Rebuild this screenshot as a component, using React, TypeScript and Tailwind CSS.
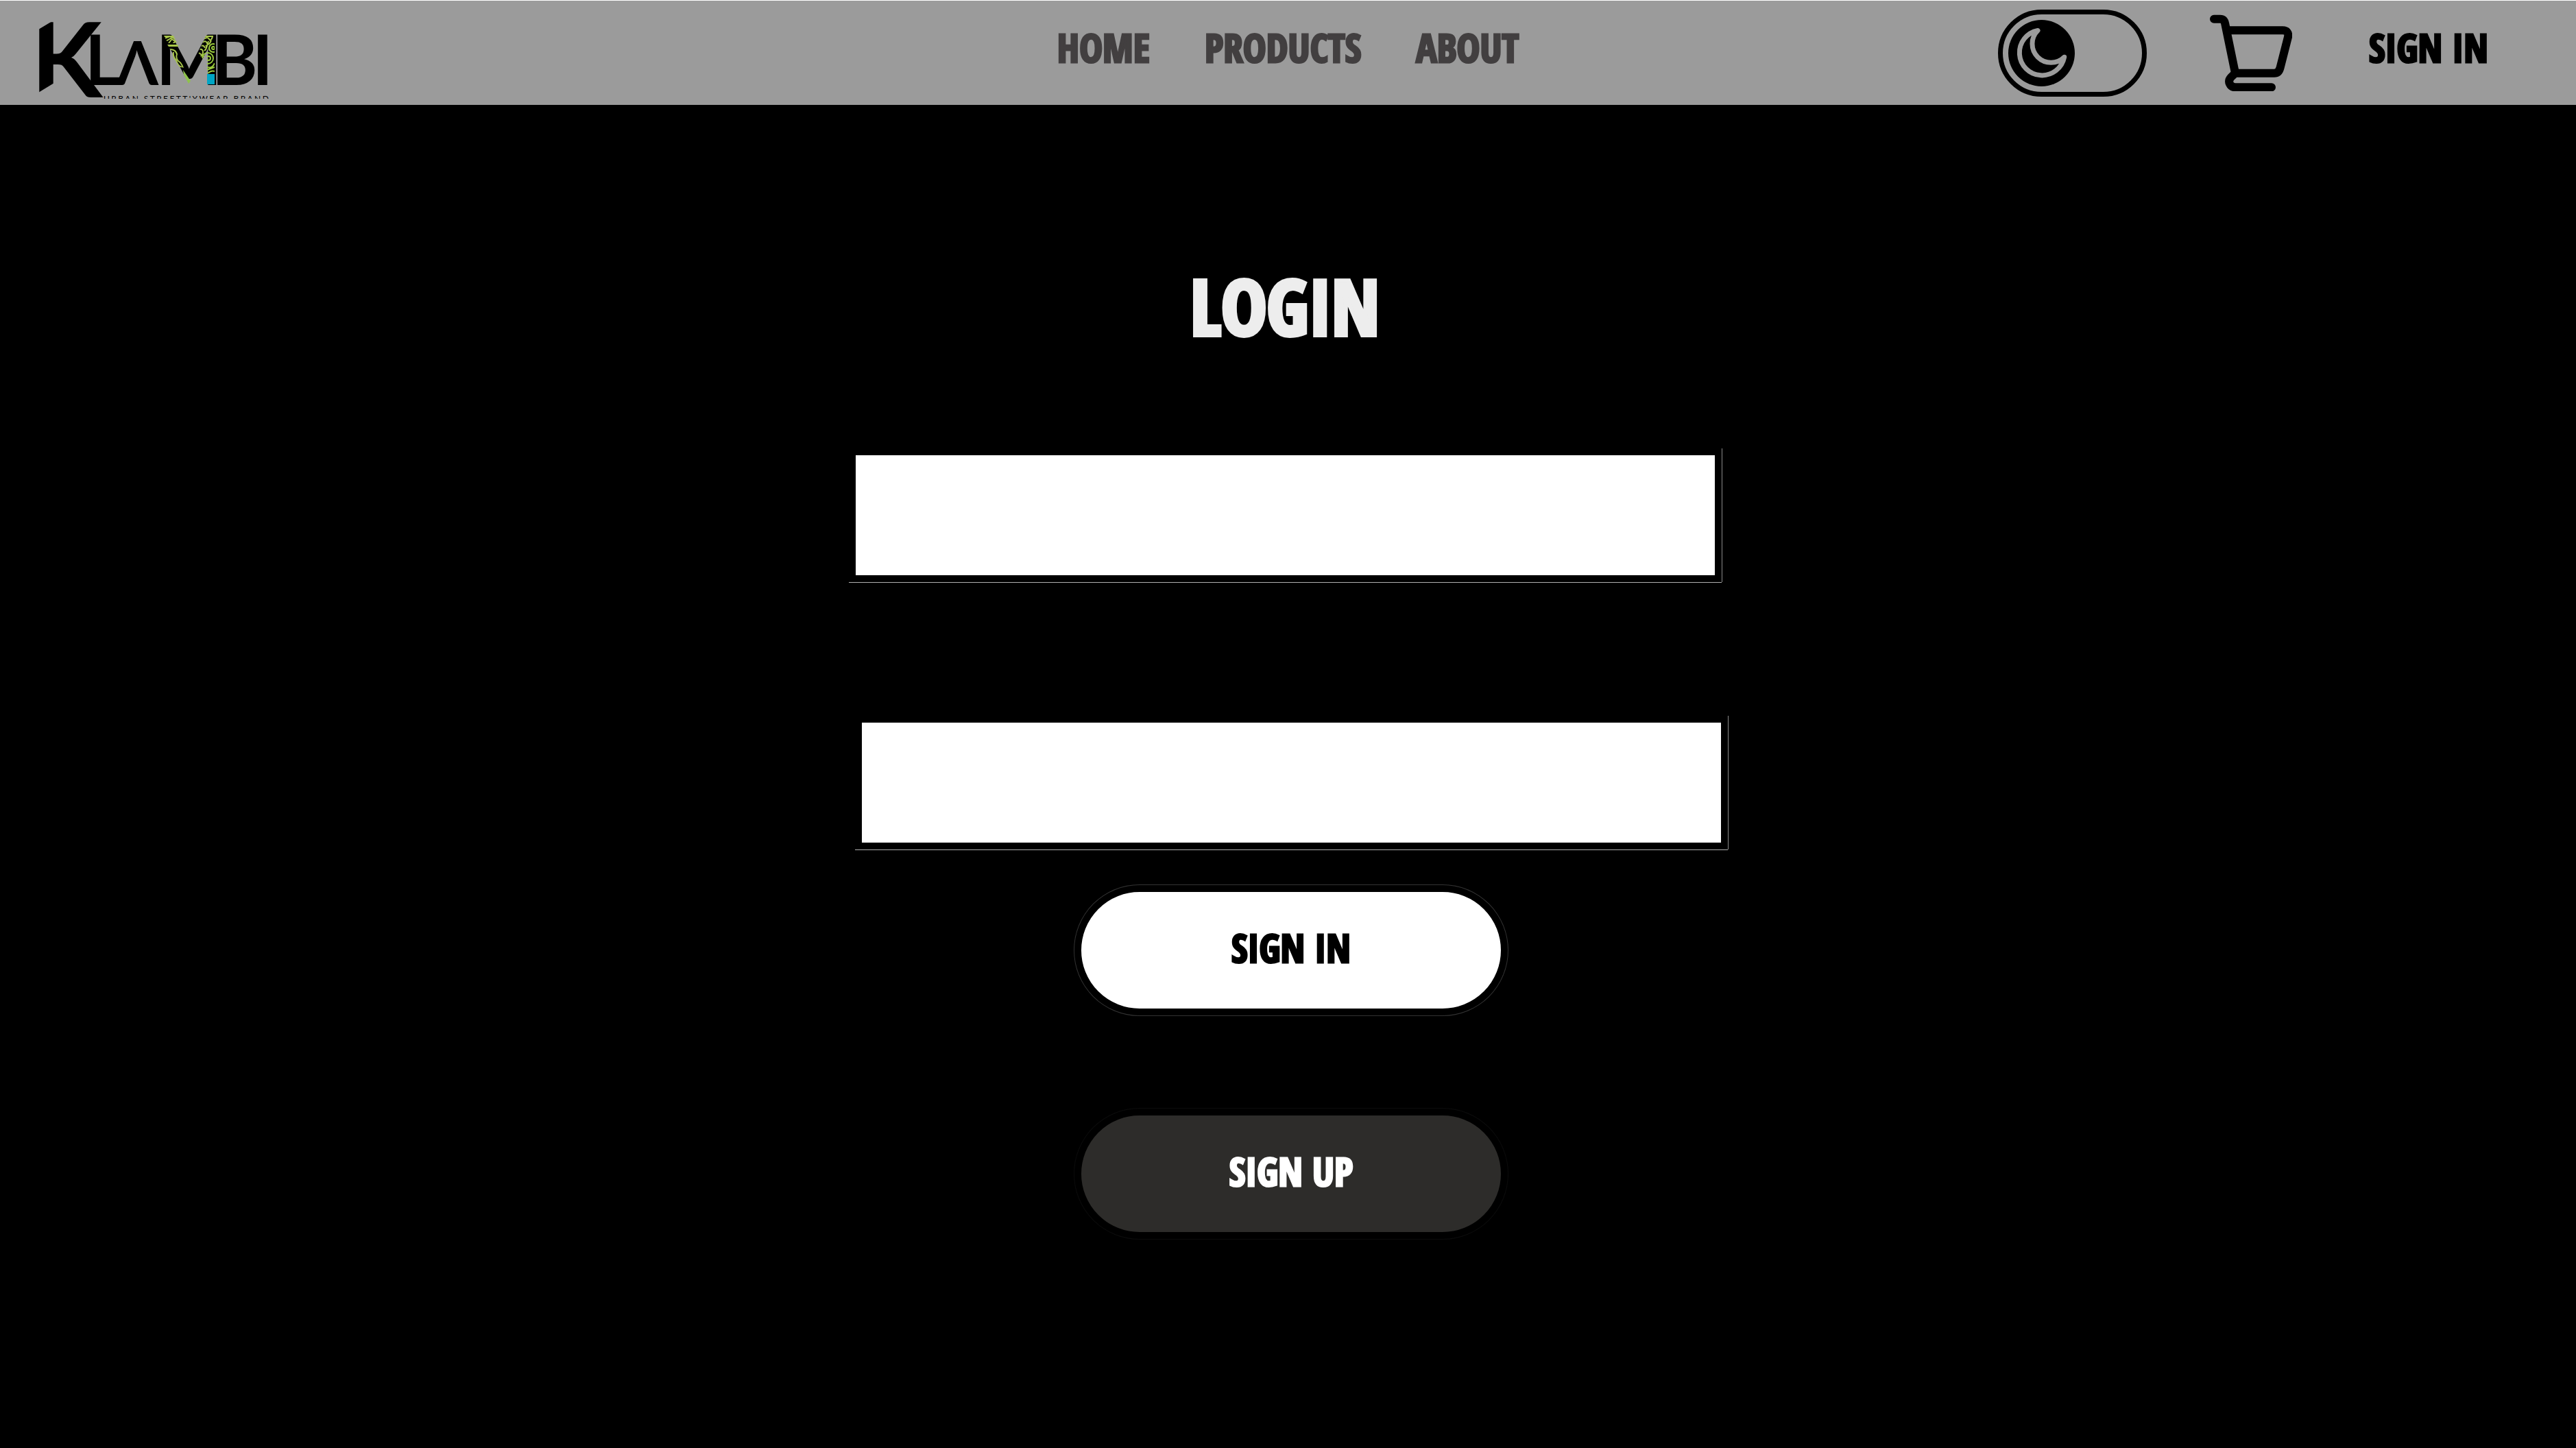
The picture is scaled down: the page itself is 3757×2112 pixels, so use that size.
import { useState } from "react";

const display = "font-['Open_Sans_Condensed','Roboto_Condensed','Open_Sans',sans-serif] font-black leading-none";
const label = `${display} text-[57px] [-webkit-text-stroke:3px_currentColor]`;

function Logo() {
  return (
    <svg
      viewBox="58 1 332 143"
      className="h-[143px] w-[332px] overflow-visible font-['Lato',sans-serif]"
      role="img"
      aria-label="Klambi Urban Streetwear Brand"
    >
      <defs>
        <clipPath id="tagline">
          <rect x="145" y="130" width="260" height="14" />
        </clipPath>
        <clipPath id="leftBar">
          <polygon points="239,52 253,52 258,63 245,63" />
          <polygon points="248,71 256,71 262,82 269,99 262,98 254,86" />
        </clipPath>
        <clipPath id="rightBar">
          <polygon points="300,52 313,52 313,55 296,86 289,78" />
          <rect x="302" y="52" width="11" height="55" />
        </clipPath>
      </defs>
      <g fontWeight="700">
        <text x="45" y="142" fontSize="152">K</text>
        <g fontSize="101">
          <text x="124" y="124">L</text>
          <text x="170" y="124" fontSize="88">Λ</text>
          <text x="228" y="124">M</text>
          <text x="309" y="124">B</text>
          <text x="368" y="124">I</text>
        </g>
      </g>
      <g fill="#9b9b9b">
        <polygon points="56,30 76,30 76,31 56,43" />
        <polygon points="56,135 79,121 79,144 56,144" />
      </g>
      <g clipPath="url(#leftBar)" fill="none" stroke="#a8c64a" strokeWidth="2">
        <path d="M238 53l18 0M240 56l8 -3 8 4M242 60l7 -4 9 6M246 63l4 -5M252 64l6 -6M254 52l5 10" />
        <path d="M248 72q8 0 10 7q-2 6 2 10q5 3 7 10M253 76q-1 8 4 12q2 8 8 10" />
      </g>
      <g fill="#a8c64a">
        <polygon points="244,65 259,65 260,68 246,68" />
        <polygon points="267,102 278,118 275,122 268,109" fill="#8fc24c" />
      </g>
      <g clipPath="url(#rightBar)" fill="none" stroke="#a8c64a" strokeWidth="2">
        <path d="M299 53l12 0M297 57q6 -4 8 0t5 -3M295 62q5 -4 7 1t6 -4M293 67q4 -2 6 3M291 72q5 -1 5 4t-4 6M290 77l8 6M300 66q3 4 -2 8M304 60l-3 10" />
        <g stroke="#9acb3c">
          <circle cx="311" cy="70" r="2" />
          <circle cx="311" cy="70" r="6" />
          <circle cx="304" cy="85" r="3" />
          <circle cx="303" cy="85" r="8" />
          <path d="M302 98q8 2 11 -6M302 102l11 -4M303 107q5 -5 10 -3" />
        </g>
      </g>
      <rect x="302" y="108" width="11" height="15" fill="#00a5c4" />
      <text x="151" y="148" fontSize="12" className="tracking-[0.2em]" clipPath="url(#tagline)">
        URBAN STREETT'YWEAR BRAND
      </text>
    </svg>
  );
}

function ThemeToggle() {
  const [dark, setDark] = useState(true);
  return (
    <label className="flex h-[127px] w-[217px] cursor-pointer items-center rounded-full border-[7px] border-black p-2">
      <input
        type="checkbox"
        role="switch"
        aria-label="Dark mode"
        className="peer sr-only"
        checked={dark}
        onChange={(e) => setDark(e.target.checked)}
      />
      <svg viewBox="0 0 97 97" className="size-[97px] shrink-0 peer-[:not(:checked)]:ml-auto" aria-hidden="true">
        <circle cx="48.5" cy="48.5" r="48.5" />
        <path
          d="M43 15.5A33 33 0 1 0 81.7 54.3A27 27 0 0 1 43 15.5Z"
          fill="none"
          stroke="#9b9b9b"
          strokeWidth="7"
          strokeLinejoin="round"
        />
      </svg>
    </label>
  );
}

function CartIcon() {
  return (
    <svg
      viewBox="0 0 120 112"
      className="h-[112px] w-[120px]"
      fill="none"
      stroke="currentColor"
      strokeWidth="12"
      strokeLinecap="round"
      strokeLinejoin="round"
      aria-hidden="true"
    >
      <path d="M6 6.7H15Q21 6.7 22.3 14L36.5 83" />
      <path d="M25.7 23.3H106Q115.5 23.3 114 33L102.5 78Q100.5 85.7 94 85.7H37L31 91.5C25 98 29.5 106.3 37 106.3H90" />
    </svg>
  );
}

const links = ["HOME", "PRODUCTS", "ABOUT"];

const field =
  "block h-[195px] w-full rounded-none border-10 border-black bg-white px-8 text-[57px] text-black shadow-[1px_0_0_#8a8a8a,0_1px_0_#b0b0b0] outline-none";
const pill = "h-[190px] w-full max-w-[632px] rounded-full border-10 border-black pb-2";

export default function App() {
  return (
    <div className="min-h-screen bg-black">
      <header className="grid h-[153px] grid-cols-[1fr_auto_1fr] items-center border-t border-white bg-[#9b9b9b] px-[58px]">
        <a href="#home" className="self-start justify-self-start">
          <Logo />
        </a>
        <nav className="flex gap-20 pb-4 text-[#423f40]">
          {links.map((name) => (
            <a key={name} href={`#${name.toLowerCase()}`} className={label}>
              {name}
            </a>
          ))}
        </nav>
        <div className="flex items-center justify-end pr-[70px] text-black">
          <ThemeToggle />
          <button type="button" aria-label="Cart" className="mr-28 ml-[92px]">
            <CartIcon />
          </button>
          <a href="#signin" className={`${label} pb-4 whitespace-nowrap`}>
            SIGN IN
          </a>
        </div>
      </header>
      <main className="mx-auto max-w-[1282px] pt-[237px]">
        <form onSubmit={(e) => e.preventDefault()}>
          <div className="flex flex-col items-center gap-[152px] pr-[9px]">
            <h1 className={`${display} text-[112px] text-[#ededed] [-webkit-text-stroke:6px_currentColor]`}>LOGIN</h1>
            <input type="email" aria-label="Email" className={field} />
          </div>
          <div className="flex flex-col items-center pt-[195px] pl-[9px]">
            <input type="password" aria-label="Password" className={field} />
            <button
              type="submit"
              className={`${pill} ${label} mt-[52px] bg-white text-black shadow-[0_0_0_1px_#333333]`}
            >
              SIGN IN
            </button>
            <button
              type="button"
              className={`${pill} ${label} mt-[136px] bg-[#2d2c2a] text-white shadow-[0_0_0_1px_#0c0c0c]`}
            >
              SIGN UP
            </button>
          </div>
        </form>
      </main>
    </div>
  );
}
